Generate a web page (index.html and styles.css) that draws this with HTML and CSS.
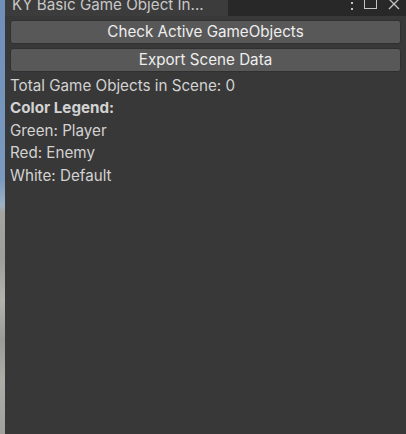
FILE: index.html
```html
<!DOCTYPE html>
<html>
<head>
<meta charset="utf-8">
<link rel="stylesheet" href="styles.css">
</head>
<body>
<div class="app">
  <div class="scene"></div>
  <div class="window">
    <div class="tabbar">
      <div class="tab">KY Basic Game Object In...</div>
      <div class="tools">
        <svg class="kebab" width="4" height="12" viewBox="0 0 4 12"><rect x="1" y="2" width="2" height="2" fill="#c4c4c4"/><rect x="1" y="8" width="2" height="2" fill="#c4c4c4"/></svg>
        <svg class="maxi" width="14" height="10" viewBox="0 0 14 10"><rect x="0.5" y="-1.5" width="12" height="10" fill="none" stroke="#c4c4c4" stroke-width="1"/></svg>
        <svg class="close" width="12" height="11" viewBox="0 0 12 11"><path d="M1 -1 L11 9 M11 -1 L1 9" stroke="#c4c4c4" stroke-width="1.3" fill="none"/></svg>
      </div>
    </div>
    <div class="content">
      <button class="btn">Check Active GameObjects</button>
      <button class="btn last">Export Scene Data</button>
      <div class="label">Total Game Objects in Scene: 0</div>
      <div class="label bold">Color Legend:</div>
      <div class="label">Green: Player</div>
      <div class="label">Red: Enemy</div>
      <div class="label">White: Default</div>
    </div>
  </div>
</div>
</body>
</html>
```
FILE: styles.css
```css
* { box-sizing: border-box; }
html, body { margin: 0; padding: 0; width: 406px; height: 434px; overflow: hidden; background: #383838; }
.app { display: flex; width: 406px; height: 434px; }
.scene {
  width: 5px;
  flex: none;
  background: linear-gradient(to bottom, #6f8fb9 0px, #7b9ac0 180px, #9db3c4 205px, #a5a5a0 212px, #9e9e9a 260px, #b3b3ae 300px, #9a9a96 340px, #adada8 380px, #a0a09c 434px);
}
.window { flex: 1; display: flex; flex-direction: column; background: #383838; }
.tabbar { height: 16px; display: flex; background: #282828; align-items: flex-start; }
.tab {
  width: 223px;
  height: 16px;
  background: #3c3c3c;
  color: #c8c8c8;
  font-family: Inter, "Noto Sans", sans-serif;
  font-size: 15.2px;
  line-height: 10px;
  padding-left: 7px;
  white-space: nowrap;
  overflow: hidden;
}
.tools { flex: 1; display: flex; justify-content: flex-end; align-items: flex-start; gap: 10px; padding-right: 6px; }
.content { display: flex; flex-direction: column; padding: 4px 5px 0 5px; }
.btn {
  height: 24px;
  margin-bottom: 4px;
  background: #585858;
  border: 1px solid #303030;
  border-radius: 3px;
  color: #eeeeee;
  font-family: Inter, "Noto Sans", sans-serif;
  font-size: 15.2px;
  padding: 0;
  line-height: 20px;
}
.btn.last { margin-bottom: 2.5px; }
.label {
  color: #d2d2d2;
  font-family: Inter, "Noto Sans", sans-serif;
  font-size: 15.2px;
  height: 22.5px;
  line-height: 22.5px;
}
.bold { font-weight: 700; }
```
